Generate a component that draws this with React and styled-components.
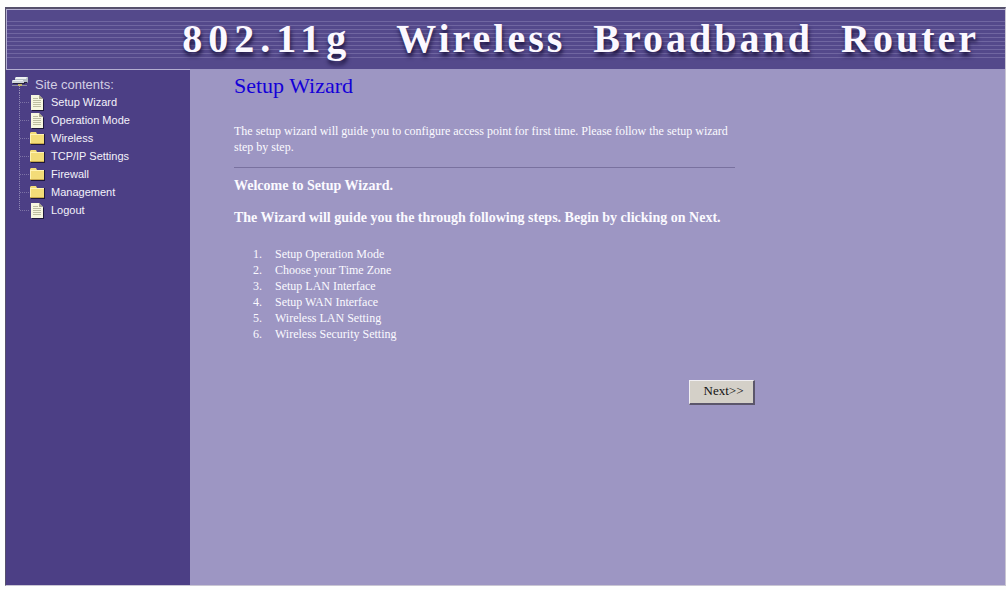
import React from "react";
import styled, { createGlobalStyle } from "styled-components";

const GlobalStyle = createGlobalStyle`
  * { box-sizing: border-box; }
  body { margin: 0; background: #fdfefd; }
`;

const serif = `"Liberation Serif", "Times New Roman", serif`;
const sans = `"Liberation Sans", Arial, sans-serif`;

const Page = styled.div`
  display: flex;
  min-height: 100vh;
  padding: 7px 0 4px 5px;
`;

const Frame = styled.div`
  flex: 1;
  display: flex;
  flex-direction: column;
  border: solid #55506c;
  border-width: 2px 1px 1px 1px;
  border-right-color: #c9c6d3;
  border-bottom-color: #c9c6d3;
`;

const Banner = styled.header`
  display: flex;
  align-items: center;
  justify-content: flex-end;
  height: 60px;
  padding: 0 26px 2px 0;
  border-top: 1px solid #b3aed0;
  border-left: 1px solid #b3aed0;
  background: #54498b;
  background-image: repeating-linear-gradient(#7066a1 0 1px, transparent 1px 4px);
  background-repeat: no-repeat;
  background-position: 0 11px;
  background-size: 100% 37px;
`;

const Title = styled.h1`
  display: flex;
  gap: 28px;
  margin: 0;
  font: bold 40px/44px ${serif};
  letter-spacing: 3px;
  color: #fbf8ff;
  text-shadow: 1px 4px 4px #1c1440;
  white-space: nowrap;
`;

const Model = styled.span`
  margin-right: 16px;
  letter-spacing: 6px;
`;

const Body = styled.div`
  flex: 1;
  display: flex;
`;

const Sidebar = styled.nav`
  width: 184px;
  flex-shrink: 0;
  padding: 5px 6px;
  border-top: 1px solid #b3aed0;
  background: #4c3f85;
  font-family: ${sans};
`;

const SiteRoot = styled.div`
  display: flex;
  align-items: center;
  gap: 6px;
  height: 18px;
  font-size: 13px;
  color: #d3cfe4;
`;

const Tree = styled.ul`
  margin: 0;
  padding: 0;
  list-style: none;
`;

const Branch = styled.li`
  display: flex;
  align-items: center;
  height: 18px;
`;

const TreeLink = styled.a`
  display: flex;
  align-items: center;
  gap: 5px;
  font-size: 11px;
  line-height: 18px;
  color: #f3f1fa;
  text-decoration: none;
`;

const Main = styled.main`
  flex: 1;
  padding: 4px 24px 24px 44px;
  background: #9d96c3;
  font: 12px/16px ${serif};
  color: #fbfaff;
`;

const Column = styled.div`
  max-width: 521px;
`;

const Heading = styled.h2`
  margin: 0 0 24px;
  font: 22px/26px ${serif};
  color: #1400d8;
`;

const Intro = styled.p`
  max-width: 501px;
  margin: 0;
`;

const Rule = styled.hr`
  max-width: 501px;
  margin: 12px 0 10px;
  border: 0;
  border-top: 1px solid #79719f;
`;

const Notice = styled.p`
  margin: 0 0 16px;
  font-size: 14px;
  font-weight: bold;
`;

const Steps = styled.ol`
  margin: 20px 0 38px;
  padding: 0 0 0 31px;
`;

const Step = styled.li`
  padding-left: 10px;
`;

const Actions = styled.div`
  display: flex;
  justify-content: flex-end;
`;

const NextButton = styled.button`
  width: 66px;
  height: 25px;
  padding: 0 0 2px 4px;
  border: solid;
  border-width: 1px 2px 2px 1px;
  border-color: #f1eff2 #5b566b #5b566b #f1eff2;
  background: #d4d0c8;
  color: #111;
  font: 13px/16px ${serif};
`;

const RootIcon = () => (
  <svg width="17" height="18" viewBox="0 0 17 18" aria-hidden="true">
    <path d="M4 2h12v5l-1 1H3V6H0l1-1h2V3z" fill="#b4bdc6" />
    <path d="M4 2h11l-1 2H3zM1 5h10v1H0z" fill="#eef1f4" />
    <path d="M0 6h12v2H0z" fill="#cfd5da" />
    <path d="M12 7h3v1h-3zM1 8h12v1H1z" fill="#262238" />
    <path d="M0 10h15v1H0z" fill="#8f90a0" />
    <path d="M6 9h4v2H6z" fill="#c2b36a" />
    <path d="M7.500 11v7" stroke="#9b93bb" strokeDasharray="1 1" />
  </svg>
);

const TreeIcon = ({ kind, last }) => (
  <svg width="34" height="18" viewBox="0 0 34 18" aria-hidden="true">
    <path d={last ? "M7.500 0v10" : "M7.500 0v18"} stroke="#9188b5" strokeDasharray="1 1" />
    <path d="M8 9.500h10" stroke="#7d73a6" strokeDasharray="1 1" />
    {kind === "folder" ? (
      <>
        <path d="M19 5h14v11H19z" fill="#1d173a" />
        <path d="M18 4l1-1h5l1 2h7v10H18z" fill="#f3dc78" />
        <path d="M18 5h1v10h-1zM19 5h13v1H19z" fill="#fff3b4" />
        <path d="M18 14h14v1H18z" fill="#c9a94d" />
      </>
    ) : (
      <>
        <path d="M20 3h8l4 4v11H20z" fill="#1d173a" />
        <path d="M19 2h8l4 4v11H19z" fill="#f6f6df" />
        <path d="M27 2v4h4z" fill="#a9a68c" />
        <path d="M21 5.500h5M21 7.500h8M21 9.500h8M21 11.500h8M21 13.500h8" stroke="#bdbda2" />
      </>
    )}
  </svg>
);

const menu = [
  ["Setup Wizard", "page"],
  ["Operation Mode", "page"],
  ["Wireless", "folder"],
  ["TCP/IP Settings", "folder"],
  ["Firewall", "folder"],
  ["Management", "folder"],
  ["Logout", "page"],
];

const steps = [
  "Setup Operation Mode",
  "Choose your Time Zone",
  "Setup LAN Interface",
  "Setup WAN Interface",
  "Wireless LAN Setting",
  "Wireless Security Setting",
];

export default function App() {
  return (
    <Page>
      <GlobalStyle />
      <Frame>
        <Banner>
          <Title>
            <Model>802.11g</Model>
            <span>Wireless</span>
            <span>Broadband</span>
            <span>Router</span>
          </Title>
        </Banner>
        <Body>
          <Sidebar>
            <SiteRoot>
              <RootIcon />
              Site contents:
            </SiteRoot>
            <Tree>
              {menu.map(([label, kind], i) => (
                <Branch key={label}>
                  <TreeLink href="#">
                    <TreeIcon kind={kind} last={i === menu.length - 1} />
                    {label}
                  </TreeLink>
                </Branch>
              ))}
            </Tree>
          </Sidebar>
          <Main>
            <Column>
              <Heading>Setup Wizard</Heading>
              <Intro>
                The setup wizard will guide you to configure access point for first time. Please
                follow the setup wizard step by step.
              </Intro>
              <Rule />
              <Notice>Welcome to Setup Wizard.</Notice>
              <Notice>
                The Wizard will guide you the through following steps. Begin by clicking on Next.
              </Notice>
              <Steps>
                {steps.map((step) => (
                  <Step key={step}>{step}</Step>
                ))}
              </Steps>
              <Actions>
                <NextButton type="button">Next&gt;&gt;</NextButton>
              </Actions>
            </Column>
          </Main>
        </Body>
      </Frame>
    </Page>
  );
}
